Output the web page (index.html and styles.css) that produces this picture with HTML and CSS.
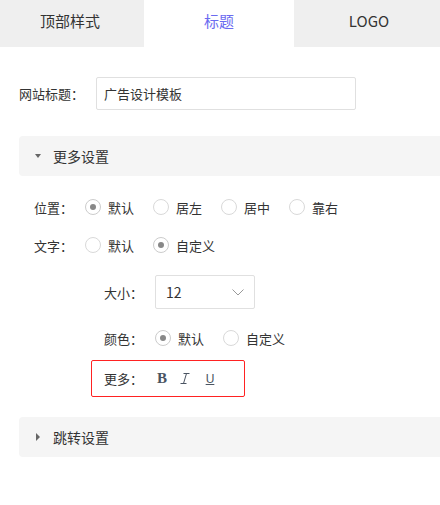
FILE: index.html
```html
<!DOCTYPE html>
<html lang="zh-CN">
<head>
    <meta charset="UTF-8">
    <meta name="viewport" content="width=device-width, initial-scale=1.0">
    <title>标题设置</title>
    <link rel="stylesheet" href="styles.css">
</head>
<body>

<div class="tabs">
    <div class="tab tab-first">顶部样式</div>
    <div class="tab tab-active">标题</div>
    <div class="tab tab-last">LOGO</div>
</div>

<div class="title-row">
    <label class="title-label">网站标题：</label>
    <input class="title-input" type="text" value="广告设计模板">
</div>

<div class="panel">
    <span class="arrow arrow-down"></span>
    <span class="panel-title">更多设置</span>
</div>

<div class="options">
    <div class="option-row">
        <span class="option-label">位置：</span>
        <span class="radio checked"></span><span class="radio-text">默认</span>
        <span class="radio"></span><span class="radio-text">居左</span>
        <span class="radio"></span><span class="radio-text">居中</span>
        <span class="radio"></span><span class="radio-text">靠右</span>
    </div>
    <div class="option-row">
        <span class="option-label">文字：</span>
        <span class="radio"></span><span class="radio-text">默认</span>
        <span class="radio checked"></span><span class="radio-text">自定义</span>
    </div>

    <div class="sub-options">
        <div class="size-row">
            <span class="option-label">大小：</span>
            <div class="select">
                <span>12</span>
                <svg class="chevron" width="12" height="7" viewBox="0 0 12 7">
                    <path d="M0.5 0.5 L6 6 L11.5 0.5" fill="none" stroke="#999" stroke-width="1"/>
                </svg>
            </div>
        </div>
        <div class="color-row">
            <span class="option-label">颜色：</span>
            <span class="radio checked"></span><span class="radio-text">默认</span>
            <span class="radio"></span><span class="radio-text">自定义</span>
        </div>
    </div>

    <div class="more-box">
        <span class="option-label">更多：</span>
        <span class="fmt fmt-bold">B</span>
        <svg class="fmt-icon" width="10" height="11" viewBox="0 0 10 11">
            <path d="M3.5 0.5 H9.5 M0.5 10.5 H6.5 M6.5 0.5 L3.5 10.5" fill="none" stroke="#4a5462" stroke-width="1"/>
        </svg>
        <span class="fmt fmt-underline">U</span>
    </div>
</div>

<div class="panel panel-jump">
    <span class="arrow arrow-right"></span>
    <span class="panel-title">跳转设置</span>
</div>

</body>
</html>
```

FILE: styles.css
```css
body {
    margin: 0;
    font-family: "Noto Sans CJK SC", "Liberation Sans", sans-serif;
    font-size: 13px;
    color: #333;
    background-color: #fff;
}

.tabs {
    display: flex;
    height: 47px;
}

.tab {
    font-size: 15px;
    line-height: 42px;
    text-align: center;
    background-color: #efefef;
    color: #333;
}

.tab-first {
    width: 144px;
    padding-right: 4px;
    box-sizing: border-box;
}

.tab-active {
    width: 150px;
    background-color: #fff;
    color: #6b6bf0;
}

.tab-last {
    width: 146px;
    padding-left: 4px;
    box-sizing: border-box;
}

.title-row {
    display: flex;
    align-items: center;
    margin-top: 30px;
    padding-left: 19px;
}

.title-label {
    width: 77px;
}

.title-input {
    width: 260px;
    height: 33px;
    box-sizing: border-box;
    border: 1px solid #e0e0e0;
    border-radius: 2px;
    padding: 0 7px;
    font-family: inherit;
    font-size: 13px;
    color: #333;
    outline: none;
}

.panel {
    display: flex;
    align-items: center;
    height: 40px;
    margin: 26px 0 0 19px;
    background-color: #f5f5f5;
    border-radius: 4px 0 0 4px;
}

.panel-title {
    font-size: 14px;
}

.arrow {
    width: 0;
    height: 0;
    margin-left: 16px;
    margin-right: 12px;
}

.arrow-down {
    border-left: 3.5px solid transparent;
    border-right: 3.5px solid transparent;
    border-top: 4px solid #666;
}

.arrow-right {
    margin-left: 17px;
    margin-right: 13px;
    border-top: 4px solid transparent;
    border-bottom: 4px solid transparent;
    border-left: 4px solid #666;
}

.panel-jump {
    margin-top: 20px;
}

.options {
    padding-left: 34px;
    padding-top: 12px;
}

.option-row {
    display: flex;
    align-items: center;
    height: 38px;
}

.option-label {
    width: 51px;
    flex-shrink: 0;
}

.radio {
    width: 16px;
    height: 16px;
    box-sizing: border-box;
    border: 1px solid #d9d9d9;
    border-radius: 50%;
    margin-right: 7px;
    position: relative;
}

.radio.checked {
    border-color: #ccc;
}

.radio.checked::after {
    content: "";
    position: absolute;
    left: 4px;
    top: 4px;
    width: 6px;
    height: 6px;
    border-radius: 50%;
    background-color: #888;
}

.radio-text {
    margin-right: 19px;
}

.sub-options {
    padding-left: 70px;
}

.size-row {
    display: flex;
    align-items: center;
    margin-top: 11px;
}

.select {
    display: flex;
    align-items: center;
    justify-content: space-between;
    width: 100px;
    height: 34px;
    box-sizing: border-box;
    border: 1px solid #e0e0e0;
    border-radius: 2px;
    padding: 0 10px 0 10px;
    font-size: 14px;
}

.color-row {
    display: flex;
    align-items: center;
    height: 30px;
    margin-top: 14px;
}

.more-box {
    display: flex;
    align-items: center;
    width: 154px;
    height: 37px;
    box-sizing: border-box;
    margin: 7px 0 0 57px;
    padding-left: 12px;
    border: 1px solid #f22;
    border-radius: 2px;
}

.fmt {
    color: #4a5462;
    text-align: center;
}

.fmt-bold {
    width: 10px;
    margin-left: 2px;
    margin-right: 13px;
    font-family: "Liberation Serif", serif;
    font-weight: bold;
    font-size: 15px;
}

.fmt-icon {
    margin-right: 15px;
}

.fmt-underline {
    width: 10px;
    font-family: "Liberation Sans", sans-serif;
    font-size: 12px;
    text-decoration: underline;
}
```
